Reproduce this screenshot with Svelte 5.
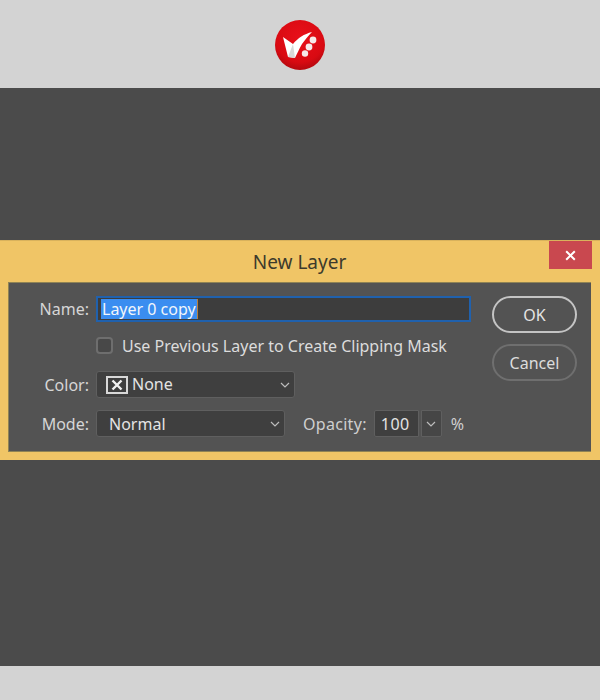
<script lang="ts">
	// New Layer dialog, static recreation
	let layerName = 'Layer 0 copy';
</script>

<div class="page">
	<header class="top">
		<svg class="logo" width="50" height="50" viewBox="0 0 50 50" aria-label="logo">
			<defs>
				<radialGradient id="red" cx="50%" cy="35%" r="70%">
					<stop offset="0" stop-color="#e8101a" />
					<stop offset="0.7" stop-color="#d90a12" />
					<stop offset="1" stop-color="#a8080e" />
				</radialGradient>
			</defs>
			<circle cx="25" cy="25" r="25" fill="url(#red)" />
			<path d="M8 17 L18 24 C23 18 29 14 37 12 C33 16 30 20 27 24 C24 29 22 34 20 38 L13 37 Z" fill="#fff" />
			<path d="M18 24 L20 38 L13 37 Z" fill="#d8d8d8" />
			<circle cx="38" cy="20" r="3.4" fill="#f6e9e9" />
			<circle cx="34" cy="27" r="3.4" fill="#f6e9e9" />
			<circle cx="30" cy="33.5" r="3.2" fill="#f6e9e9" />
		</svg>
	</header>

	<main class="stage">
		<section class="dialog" role="dialog" aria-label="New Layer">
			<div class="titlebar">
				<h1>New Layer</h1>
				<button class="close" aria-label="Close">
					<svg width="11" height="11" viewBox="0 0 11 11">
						<path d="M1.2 1.2 L9.8 9.8 M9.8 1.2 L1.2 9.8" stroke="#fff" stroke-width="2" fill="none" />
					</svg>
				</button>
			</div>

			<div class="panel">
				<div class="fields">
					<div class="row name-row">
						<span class="label">Name:</span>
						<div class="name-input"><span class="selected">{layerName}</span></div>
					</div>
					<div class="row check-row">
						<span class="checkbox"></span>
						<span class="check-text">Use Previous Layer to Create Clipping Mask</span>
					</div>
					<div class="row color-row">
						<span class="label">Color:</span>
						<div class="select color-select">
							<svg class="swatch" width="22" height="18" viewBox="0 0 22 18">
								<rect x="1" y="1" width="20" height="16" fill="#3e3e3e" stroke="#d8d8d8" stroke-width="2" />
								<path d="M6.5 4.5 L15.5 13.5 M15.5 4.5 L6.5 13.5" stroke="#f0f0f0" stroke-width="2.4" />
							</svg>
							<span class="value none">None</span>
							<svg class="chev" width="10" height="6" viewBox="0 0 10 6"><path d="M1 1 L5 5 L9 1" stroke="#bdbdbd" stroke-width="1.2" fill="none" /></svg>
						</div>
					</div>
					<div class="row mode-row">
						<span class="label">Mode:</span>
						<div class="select mode-select">
							<span class="value">Normal</span>
							<svg class="chev" width="10" height="6" viewBox="0 0 10 6"><path d="M1 1 L5 5 L9 1" stroke="#bdbdbd" stroke-width="1.2" fill="none" /></svg>
						</div>
						<span class="opacity-label">Opacity:</span>
						<div class="opacity-value">100</div>
						<div class="opacity-arrow">
							<svg width="10" height="6" viewBox="0 0 10 6"><path d="M1 1 L5 5 L9 1" stroke="#bdbdbd" stroke-width="1.2" fill="none" /></svg>
						</div>
						<span class="percent">%</span>
					</div>
				</div>

				<div class="actions">
					<button class="btn primary">OK</button>
					<button class="btn">Cancel</button>
				</div>
			</div>
		</section>
	</main>

	<footer class="bottom"></footer>
</div>

<style>
	:global(body) {
		margin: 0;
		background: #d3d3d3;
	}

	.page {
		display: flex;
		flex-direction: column;
		width: 600px;
		height: 700px;
		font-family: 'Noto Sans', 'Open Sans', sans-serif;
		font-size: 16px;
		color: #d6d6d6;
	}

	.top {
		display: flex;
		justify-content: center;
		align-items: flex-start;
		height: 88px;
		padding-top: 20px;
		box-sizing: border-box;
		background: #d3d3d3;
	}

	.bottom {
		height: 34px;
		background: #d3d3d3;
	}

	.stage {
		flex: 1;
		padding-top: 152px;
		background: #4b4b4b;
	}

	.dialog {
		position: relative;
		box-sizing: border-box;
		height: 220px;
		padding: 0 9px 8px 8px;
		display: flex;
		flex-direction: column;
		background: #f0c566;
		border-top: 1px solid #d9b25c;
	}

	.titlebar {
		height: 41px;
		flex: none;
		display: flex;
		align-items: center;
		justify-content: center;
	}

	h1 {
		margin: 0;
		font-size: 19px;
		font-weight: 400;
		color: #3c3a2c;
	}

	.close {
		position: absolute;
		top: 0;
		right: 8px;
		width: 43px;
		height: 28px;
		padding: 0;
		border: none;
		background: #c9484f;
		display: flex;
		align-items: center;
		justify-content: center;
	}

	.panel {
		flex: 1;
		display: flex;
		justify-content: space-between;
		background: #535353;
		border: 1px solid #8f8355;
		border-width: 1px 0 1px 1px;
	}

	.fields {
		display: flex;
		flex-direction: column;
		padding: 13px 0 0 87px;
	}

	.row {
		display: flex;
		align-items: center;
	}

	.label {
		width: 80px;
		margin-left: -87px;
		margin-right: 7px;
		text-align: right;
	}

	.name-row {
		height: 26px;
		margin-bottom: 14px;
	}

	.name-input {
		box-sizing: border-box;
		width: 375px;
		height: 26px;
		padding-left: 3px;
		display: flex;
		align-items: center;
		background: #3d3d3d;
		border: 2px solid #2061ad;
	}

	.selected {
		padding: 0 1px;
		height: 20px;
		line-height: 20px;
		background: #3a8df0;
		color: #f2f6fb;
		border-right: 1px solid #b8803e;
		white-space: nowrap;
	}

	.check-row {
		height: 18px;
		margin-bottom: 17px;
		gap: 9px;
		color: #dcdcdc;
		white-space: nowrap;
	}

	.check-text {
		padding-top: 2px;
	}

	.checkbox {
		box-sizing: border-box;
		width: 17px;
		height: 17px;
		background: #484848;
		border: 2px solid #6e6e6e;
		border-radius: 4px;
	}

	.color-row {
		margin-bottom: 12px;
	}

	.select {
		box-sizing: border-box;
		height: 27px;
		display: flex;
		align-items: center;
		background: #3f3f3f;
		border: 1px solid #5f5f5f;
		border-radius: 3px;
		color: #e4e4e4;
	}

	.color-select {
		width: 199px;
		padding-left: 9px;
	}

	.swatch {
		margin-right: 4px;
	}

	.none {
		padding-bottom: 2px;
	}

	.mode-select {
		width: 189px;
		padding-left: 12px;
	}

	.chev {
		margin-left: auto;
		margin-right: 4px;
	}

	.opacity-label {
		margin-left: 18px;
		margin-right: 7px;
		letter-spacing: 0.3px;
		color: #cfcfcf;
	}

	.opacity-value {
		box-sizing: border-box;
		width: 45px;
		height: 27px;
		padding-left: 6px;
		line-height: 26px;
		letter-spacing: 0.5px;
		background: #3f3f3f;
		border: 1px solid #5f5f5f;
		border-radius: 2px 0 0 2px;
		color: #e4e4e4;
	}

	.opacity-arrow {
		box-sizing: border-box;
		width: 21px;
		height: 27px;
		margin-left: 2px;
		display: flex;
		align-items: center;
		justify-content: center;
		background: #464646;
		border: 1px solid #5f5f5f;
		border-radius: 0 2px 2px 0;
	}

	.percent {
		margin-left: 9px;
		color: #cfcfcf;
	}

	.actions {
		display: flex;
		flex-direction: column;
		gap: 11px;
		padding: 13px 14px 0 0;
	}

	.btn {
		box-sizing: border-box;
		width: 85px;
		height: 37px;
		padding: 0;
		border-radius: 19px;
		border: 2px solid #6f6f6f;
		background: #535353;
		color: #dcdcdc;
		font: inherit;
	}

	.btn.primary {
		border-color: #c4c4c4;
		color: #e4e4e4;
	}
</style>
